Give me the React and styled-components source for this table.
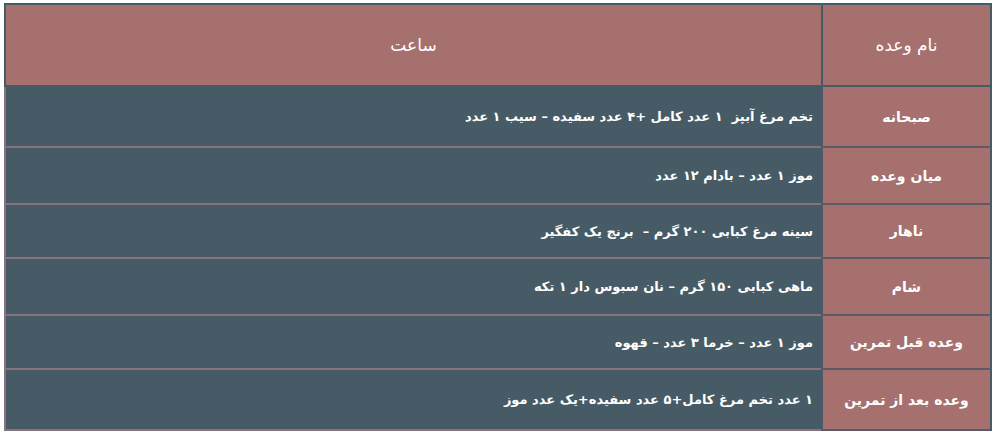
import { createGlobalStyle } from 'styled-components';
import styled from 'styled-components';

const GlobalStyle = createGlobalStyle`
  html, body {
    margin: 0;
    padding: 0;
    background: #ffffff;
  }
  body {
    font-family: 'DejaVu Sans', sans-serif;
  }
`;

const Page = styled.div`
  padding: 3px 4px;
`;

const MealTable = styled.table`
  width: 100%;
  border-spacing: 0;
  border-collapse: separate;
  direction: rtl;
  color: #ffffff;
`;

const HeadCell = styled.th`
  height: 80px;
  background: #a6706f;
  border-top: 2px solid #465b65;
  border-bottom: 2px solid #465b65;
  border-left: 2px solid #465b65;
  border-right: ${(p) => (p.$first ? '2px solid #465b65' : 'none')};
  font-size: 17px;
  font-weight: 400;
  text-align: center;
  vertical-align: middle;
  padding: 0;
  width: ${(p) => (p.$first ? '167px' : 'auto')};
`;

const Row = styled.tr`
  height: ${(p) => p.$h}px;
`;

const NameCell = styled.td`
  background: #a6706f;
  border-left: 2px solid #4d5a66;
  border-right: 2px solid #465b65;
  border-bottom: 2px solid #5d5a68;
  text-align: center;
  vertical-align: middle;
  font-size: 14px;
  font-weight: 700;
  padding: 0 4px;
  box-sizing: border-box;
`;

const FoodCell = styled.td`
  background: #465b65;
  border-left: 2px solid #86747d;
  border-bottom: 2px solid #86747d;
  text-align: right;
  vertical-align: middle;
  font-size: 13px;
  font-weight: 700;
  padding: 0 8px 0 8px;
  white-space: pre;
  box-sizing: border-box;
`;

const meals = [
  { name: 'صبحانه', food: 'تخم مرغ آبپز  ۱ عدد کامل +۴ عدد سفیده – سیب ۱ عدد', h: 61 },
  { name: 'میان وعده', food: 'موز ۱ عدد – بادام ۱۲ عدد', h: 57 },
  { name: 'ناهار', food: 'سینه مرغ کبابی ۲۰۰ گرم –  برنج یک کفگیر', h: 54 },
  { name: 'شام', food: 'ماهی کبابی ۱۵۰ گرم – نان سبوس دار ۱ تکه', h: 57 },
  { name: 'وعده قبل تمرین', food: 'موز ۱ عدد – خرما ۳ عدد – قهوه', h: 54 },
  { name: 'وعده بعد از تمرین', food: '۱ عدد تخم مرغ کامل+۵ عدد سفیده+یک عدد موز', h: 61 },
];

export default function App() {
  return (
    <Page>
      <GlobalStyle />
      <MealTable dir="rtl">
        <thead>
          <tr>
            <HeadCell $first>نام وعده</HeadCell>
            <HeadCell>ساعت</HeadCell>
          </tr>
        </thead>
        <tbody>
          {meals.map((m) => (
            <Row key={m.name} $h={m.h}>
              <NameCell>{m.name}</NameCell>
              <FoodCell>{m.food}</FoodCell>
            </Row>
          ))}
        </tbody>
      </MealTable>
    </Page>
  );
}
